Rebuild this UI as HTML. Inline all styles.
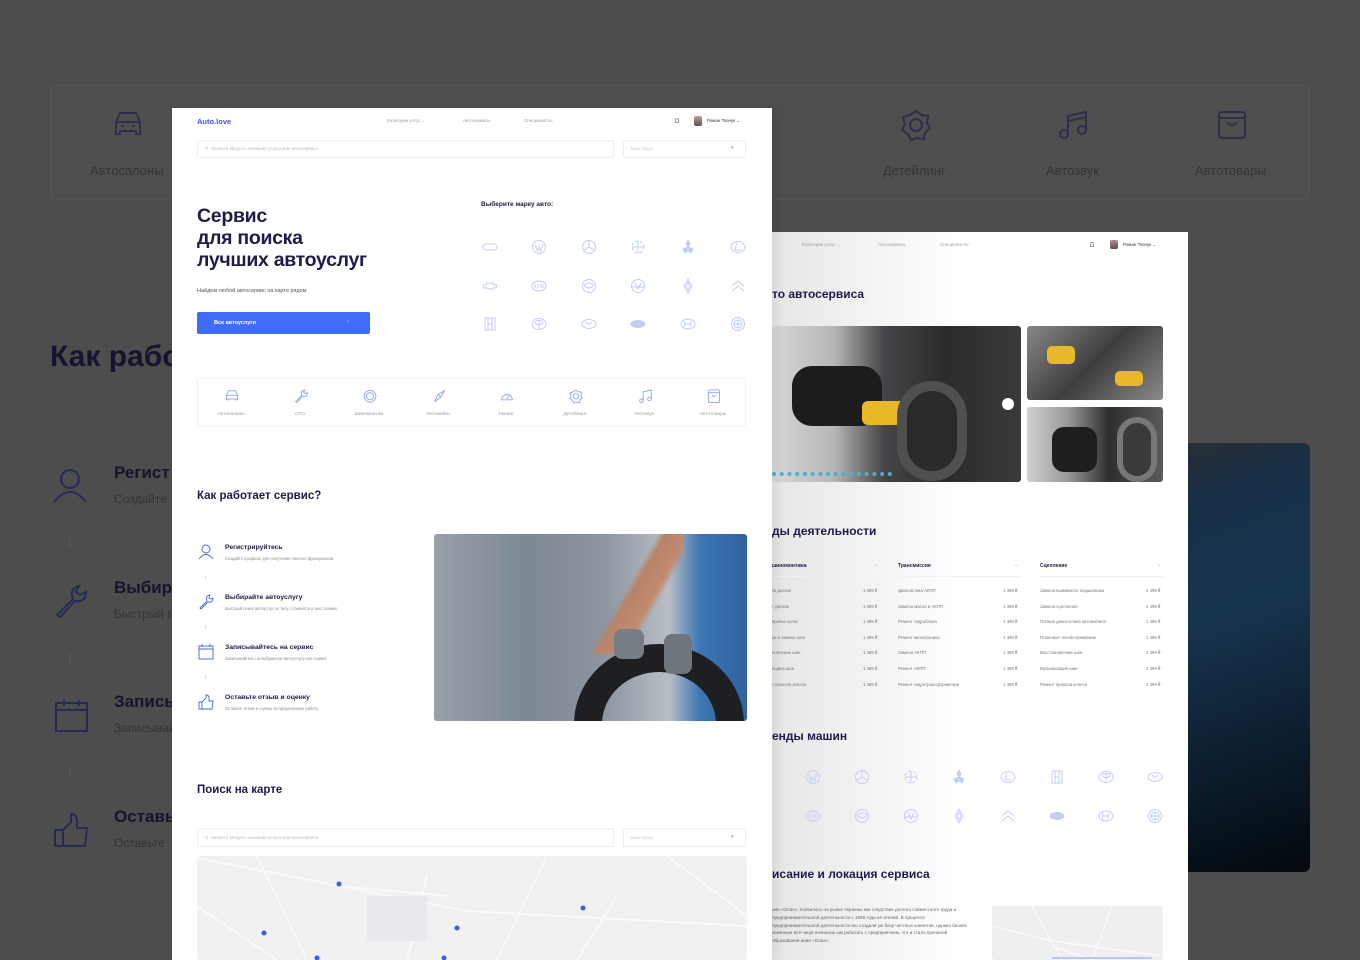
<!DOCTYPE html>
<html><head><meta charset="utf-8">
<style>
*{margin:0;padding:0;box-sizing:border-box}
body{width:1360px;height:960px;overflow:hidden;background:#4d4d4d;font-family:"Liberation Sans","Noto Sans CJK SC",sans-serif;position:relative}
.a{position:absolute;white-space:nowrap}
.dk{color:#1d1c4a;font-weight:bold}
.g{color:#9a9cab}
.bg-t{color:#15142e;font-weight:bold}
.bg-s{color:#333338}
svg{position:absolute;overflow:visible}
</style></head><body>

<!-- BACKGROUND (dimmed page) -->
<div class="a" style="left:50px;top:85px;width:1260px;height:115px;border:1px solid #555;border-radius:6px;background:#4f4f4f"></div>
<svg style="left:112px;top:110px" width="32" height="28" fill="none" stroke="#2c2f45" stroke-width="2"><path d="M4 12 L8 3 H24 L28 12 V24 H24 V21 H8 V24 H4 Z M4 12 H28 M9 16 H12 M20 16 H23"/></svg>
<div class="a bg-s" style="left:90px;top:163px;font-size:13px">Автосалоны</div>
<svg style="left:900px;top:109px" width="32" height="32" fill="none" stroke="#2c2f45" stroke-width="2"><path d="M16 2 L21 6 L28 7 L27 14 L30 19 L25 24 L24 30 L17 29 L11 31 L8 25 L2 21 L5 15 L3 8 L10 6 Z"/><circle cx="16" cy="16" r="6"/></svg>
<div class="a bg-s" style="left:883px;top:163px;font-size:13px">Детейлинг</div>
<svg style="left:1058px;top:110px" width="32" height="30" fill="none" stroke="#2c2f45" stroke-width="2"><circle cx="6" cy="24" r="4"/><circle cx="24" cy="20" r="4"/><path d="M10 24 V6 L28 2 V20 M10 11 L28 7"/></svg>
<div class="a bg-s" style="left:1046px;top:163px;font-size:13px">Автозвук</div>
<svg style="left:1217px;top:110px" width="30" height="30" fill="none" stroke="#2c2f45" stroke-width="2"><rect x="2" y="2" width="26" height="26" rx="3"/><path d="M2 8 H28 M10 12 Q15 18 20 12"/></svg>
<div class="a bg-s" style="left:1195px;top:163px;font-size:13px">Автотовары</div>
<div class="a bg-s" style="left:763px;top:163px;font-size:13px">г</div>

<div class="a bg-t" style="left:50px;top:340px;font-size:30px">Как рабо</div>
<svg style="left:52px;top:468px" width="36" height="36" fill="none" stroke="#252a55" stroke-width="2"><circle cx="18" cy="11" r="9"/><path d="M2 34 Q18 14 34 34"/></svg>
<div class="a bg-t" style="left:114px;top:463px;font-size:17px">Регист</div>
<div class="a bg-s" style="left:114px;top:492px;font-size:12px">Создайте</div>
<div class="a" style="left:69px;top:538px;width:2px;height:10px;background:#555"></div>
<svg style="left:53px;top:583px" width="36" height="36" fill="none" stroke="#252a55" stroke-width="2"><path d="M4 32 L20 16 Q16 6 26 3 L23 9 L27 12 L33 9 Q32 20 22 18 L7 34 Z"/></svg>
<div class="a bg-t" style="left:114px;top:578px;font-size:17px">Выбира</div>
<div class="a bg-s" style="left:114px;top:607px;font-size:12px">Быстрый п</div>
<div class="a" style="left:69px;top:653px;width:2px;height:10px;background:#555"></div>
<svg style="left:55px;top:699px" width="34" height="34" fill="none" stroke="#252a55" stroke-width="2"><rect x="1" y="4" width="31" height="28"/><path d="M1 11 H32 M9 1 V7 M24 1 V7"/></svg>
<div class="a bg-t" style="left:114px;top:692px;font-size:17px">Запись</div>
<div class="a bg-s" style="left:114px;top:721px;font-size:12px">Записывай</div>
<div class="a" style="left:69px;top:768px;width:2px;height:10px;background:#555"></div>
<svg style="left:53px;top:812px" width="36" height="36" fill="none" stroke="#252a55" stroke-width="2"><path d="M2 18 H10 V34 H2 Z M10 18 L18 10 V2 Q24 2 24 10 V16 H34 L32 34 H10"/></svg>
<div class="a bg-t" style="left:114px;top:807px;font-size:17px">Оставь</div>
<div class="a bg-s" style="left:114px;top:836px;font-size:12px">Оставьте</div>

<div class="a" style="left:1170px;top:443px;width:140px;height:429px;border-radius:6px;background:linear-gradient(160deg,#2a2d33 0%,#183048 15%,#17344f 40%,#0e2234 65%,#03080d 100%)"></div>

<!-- RIGHT PAGE -->
<div class="a" style="left:772px;top:232px;width:416px;height:728px;background:linear-gradient(90deg,#e6e6e6 0%,#f4f4f4 25%,#fff 45%)"></div>
<div class="a g" style="left:802px;top:242px;font-size:4.5px">Категории услуг ⌄</div>
<div class="a g" style="left:878px;top:242px;font-size:4.5px">Автосервисы</div>
<div class="a g" style="left:940px;top:242px;font-size:4.5px">Специалисты</div>
<div class="a" style="left:1090px;top:242px;width:4px;height:5px;border:1px solid #999;border-radius:2px 2px 0 0"></div>
<div class="a" style="left:1110px;top:240px;width:8px;height:9px;border-radius:2px;background:linear-gradient(#b88,#555)"></div>
<div class="a" style="left:1123px;top:242px;font-size:4.5px;color:#333">Роман Ткачук ⌄</div>
<div class="a dk" style="left:772px;top:287px;font-size:12px">то автосервиса</div>
<div class="a" style="left:772px;top:326px;width:249px;height:156px;border-radius:3px;overflow:hidden;background:linear-gradient(90deg,#d8d8d8 0%,#b6b6b6 25%,#454548 45%,#2b2b2d 70%,#3a3a3c 100%)">
 <div class="a" style="left:20px;top:40px;width:90px;height:60px;background:#1c1c1e;border-radius:20px"></div>
 <div class="a" style="left:90px;top:75px;width:45px;height:24px;background:#e8b828;border-radius:6px"></div>
 <div class="a" style="left:125px;top:55px;width:70px;height:100px;border-radius:35px;background:#2a2a2a;border:10px solid #505050"></div>
 <div class="a" style="left:0px;top:130px;width:120px;height:20px;border-bottom:4px dotted #4ab0d0"></div>
 <div class="a" style="left:230px;top:72px;width:12px;height:12px;border-radius:50%;background:#fff"></div>
</div>
<div class="a" style="left:1027px;top:326px;width:136px;height:74px;border-radius:3px;background:linear-gradient(135deg,#888 0%,#3d3d3d 50%,#8a8a88 100%)">
 <div class="a" style="left:20px;top:20px;width:28px;height:18px;background:#e8b828;border-radius:5px"></div>
 <div class="a" style="left:88px;top:45px;width:28px;height:15px;background:#e8b828;border-radius:5px"></div>
</div>
<div class="a" style="left:1027px;top:407px;width:136px;height:75px;border-radius:3px;background:linear-gradient(90deg,#d0d0d0 0%,#9a9a9a 30%,#2e2e30 60%,#5a5a5a 100%)">
 <div class="a" style="left:25px;top:20px;width:45px;height:45px;background:#1e1e20;border-radius:12px"></div>
 <div class="a" style="left:90px;top:10px;width:40px;height:65px;border-radius:20px;background:#3a3a3a;border:6px solid #777"></div>
</div>
<div class="a dk" style="left:772px;top:524px;font-size:12px">ды деятельности</div>
<div id="svc"></div>
<div class="a dk" style="left:772px;top:729px;font-size:12px">енды машин</div>
<div class="a dk" style="left:772px;top:867px;font-size:12px">исание и локация сервиса</div>
<div class="a" style="left:772px;top:906px;width:200px;font-size:4.6px;line-height:7.8px;color:#666;white-space:normal">ния «Олан», появилась на рынке Украины как следствие долгого совместного труда и предпринимательской деятельности с 1999 года её ателей. В процессе предпринимательской деятельности мы создали ую базу частных клиентов, однако бизнес компании всё чаще начинали ым работать с предприятием, что и стало причиной образования ании «Олан».</div>
<div class="a" style="left:992px;top:906px;width:171px;height:54px;background:#eeeff1;border-radius:3px"></div>
<svg style="left:992px;top:906px" width="171" height="54" fill="none" stroke="#fafafa" stroke-width="1.5"><path d="M0 20 L60 35 L170 50 M40 0 L70 54 M120 0 L100 54 M60 40 L100 54"/><path d="M60 52 H160" stroke="#aab8f0"/></svg>

<!-- LEFT PAGE -->
<div class="a" style="left:172px;top:108px;width:600px;height:852px;background:#fff;box-shadow:4px 0 10px rgba(0,0,0,.08)"></div>
<div class="a" style="left:197px;top:117px;font-size:7.5px;font-weight:bold;color:#3b55e6">Auto.love</div>
<div class="a g" style="left:387px;top:118px;font-size:4.5px">Категории услуг ⌄</div>
<div class="a g" style="left:463px;top:118px;font-size:4.5px">Автосервисы</div>
<div class="a g" style="left:524px;top:118px;font-size:4.5px">Специалисты</div>
<div class="a" style="left:675px;top:118px;width:4px;height:5px;border:1px solid #999;border-radius:2px 2px 0 0"></div>
<div class="a" style="left:694px;top:116px;width:8px;height:10px;border-radius:2px;background:linear-gradient(#c99,#555)"></div>
<div class="a" style="left:707px;top:118px;font-size:4.5px;color:#333">Роман Ткачук ⌄</div>
<div class="a" style="left:197px;top:140px;width:417px;height:18px;border:1px solid #eceef5;border-radius:2px"></div>
<div class="a g" style="left:205px;top:146px;font-size:4.5px;color:#bbb">⚲ &nbsp;Начните вводить название услуги или автосервиса</div>
<div class="a" style="left:623px;top:140px;width:123px;height:18px;border:1px solid #eceef5;border-radius:2px"></div>
<div class="a" style="left:631px;top:146px;font-size:4.5px;color:#ccc">Ваш город</div>
<div class="a" style="left:731px;top:145px;font-size:5px;color:#999">▾</div>

<div class="a dk" style="left:197px;top:205px;font-size:19.5px;line-height:22px;letter-spacing:-0.3px">Сервис<br>для поиска<br>лучших автоуслуг</div>
<div class="a" style="left:197px;top:288px;font-size:5.5px;color:#555">Найдем любой автосервис на карте рядом</div>
<div class="a" style="left:197px;top:312px;width:173px;height:22px;background:#3f6cf5;border-radius:2px"></div>
<div class="a" style="left:214px;top:320px;font-size:5.5px;color:#fff;font-weight:bold">Все автоуслуги</div>
<div class="a" style="left:347px;top:319px;font-size:6px;color:#cfd9ff">›</div>
<div class="a dk" style="left:481px;top:201px;font-size:6.5px">Выберите марку авто:</div>
<div id="brands"></div>

<div class="a" style="left:197px;top:378px;width:549px;height:49px;border:1px solid #eef0f6;border-radius:3px"></div>
<div id="cats"></div>

<div class="a dk" style="left:197px;top:490px;font-size:11.5px">Как работает сервис?</div>
<div id="steps"></div>
<div class="a" style="left:434px;top:534px;width:313px;height:187px;border-radius:3px;overflow:hidden;background:linear-gradient(90deg,#98a0aa 0%,#7d8792 30%,#8e96a0 55%,#b9bec6 75%,#3d76b2 85%,#2e62a0 100%)">
 <div class="a" style="left:140px;top:110px;width:170px;height:160px;border-radius:50%;border:28px solid #1d1f22"></div>
 <div class="a" style="left:160px;top:0;width:90px;height:120px;background:linear-gradient(120deg,transparent 40%,#b88368 45%,#c08b70 60%,transparent 65%)"></div>
 <div class="a" style="left:180px;top:95px;width:30px;height:30px;background:#777d85;border-radius:8px"></div>
 <div class="a" style="left:230px;top:100px;width:28px;height:40px;background:#6f757d;border-radius:8px"></div>
</div>

<div class="a dk" style="left:197px;top:784px;font-size:11.5px">Поиск на карте</div>
<div class="a" style="left:197px;top:828px;width:417px;height:19px;border:1px solid #eceef5;border-radius:2px"></div>
<div class="a" style="left:205px;top:835px;font-size:4.5px;color:#bbb">⚲ &nbsp;Начните вводить название услуги или автосервиса</div>
<div class="a" style="left:623px;top:828px;width:123px;height:19px;border:1px solid #eceef5;border-radius:2px"></div>
<div class="a" style="left:631px;top:835px;font-size:4.5px;color:#ccc">Ваш город</div>
<div class="a" style="left:731px;top:834px;font-size:5px;color:#999">▾</div>
<div class="a" style="left:197px;top:856px;width:550px;height:104px;background:#f0f1f3;border-radius:3px"></div>
<svg style="left:197px;top:856px" width="550" height="104" fill="none" stroke="#fafafa" stroke-width="2"><path d="M0 2 L270 55 L550 70 M60 0 L110 104 M230 20 L210 104 M350 0 L300 104 M420 40 L380 104 M470 0 L550 60 M0 50 L80 104 M140 30 L250 40"/><rect x="170" y="40" width="60" height="45" fill="#e8e9ec" stroke="none"/></svg>
<svg style="left:197px;top:856px" width="550" height="104" fill="#3f5be8"><circle cx="142" cy="28" r="2.5"/><circle cx="247" cy="102" r="2.5"/><circle cx="386" cy="52" r="2.5"/><circle cx="67" cy="77" r="2.5"/><circle cx="120" cy="102" r="2.5"/><circle cx="260" cy="72" r="2.5"/></svg>

<script>
function ico(kind,c,sw){
 const P={
 car:'<path d="M2 7 L4 2 H12 L14 7 V12 H12 V11 H4 V12 H2 Z M2 7 H14"/>',
 wrench:'<path d="M2 14 L9 7 Q7 2 12 1 L11 4 L13 5 L15 4 Q15 9 10 8 L3 15 Z"/>',
 tire:'<circle cx="8" cy="8" r="6.5"/><circle cx="8" cy="8" r="4"/>',
 vac:'<path d="M3 14 L7 6 L14 2 L10 9 Z M7 6 L10 9"/>',
 speed:'<path d="M2 12 A6 6 0 1 1 14 12 Z M8 11 L11 6"/>',
 gear:'<path d="M8 1 L10.5 3 L14 3.5 L13.5 7 L15 10 L12.5 12 L12 15 L8.5 14.5 L5.5 15.5 L4 12.5 L1 10.5 L2.5 7.5 L1.5 4 L5 3 Z"/><circle cx="8" cy="8" r="3"/>',
 music:'<circle cx="4" cy="13" r="2"/><circle cx="13" cy="11" r="2"/><path d="M6 13 V3 L15 1 V11"/>',
 bag:'<rect x="2" y="1" width="12" height="14" rx="1.5"/><path d="M2 4 H14 M6 7 Q8 10 10 7"/>',
 user:'<circle cx="8" cy="5" r="4"/><path d="M1 15 Q8 6 15 15"/>',
 cal:'<rect x="1" y="2" width="14" height="13"/><path d="M1 5 H15 M4 0 V3 M12 0 V3"/>',
 like:'<path d="M1 8 H4 V15 H1 Z M4 8 L8 4 V1 Q11 1 11 4 V7 H15 L14 15 H4"/>'};
 return `<svg width="16" height="16" viewBox="0 0 16 16" fill="none" stroke="${c}" stroke-width="${sw}" style="position:static">${P[kind]}</svg>`;
}
function brand(i,c){
 const s=[
 '<rect x="1" y="5" width="14" height="6" rx="3"/>',
 '<circle cx="8" cy="8" r="6.5"/><path d="M4 5 L6.5 12 L8 8 L9.5 12 L12 5"/>',
 '<circle cx="8" cy="8" r="6.5"/><path d="M8 2 V8 L3 11 M8 8 L13 11"/>',
 '<circle cx="8" cy="8" r="6" stroke-dasharray="3 2"/><path d="M8 2 V14 M2 8 H14"/>',
 '<path d="M8 1 L10 5 L8 8 L6 5 Z M8 8 L13 10 L11 14 L7 11 Z M8 8 L3 10 L5 14 L9 11 Z" fill="'+c+'"/>',
 '<ellipse cx="8" cy="8" rx="7" ry="5.5"/><path d="M7 4 L5 11 H11"/>',
 '<path d="M1 7 H4 L5 5 H11 L12 7 H15 L14 10 H11 L10 11 H6 L5 10 H2 Z"/>',
 '<ellipse cx="8" cy="8" rx="7" ry="5"/><path d="M4 6 V10 M7 6 V10 M10 6 V10 M12 6 V10"/>',
 '<circle cx="8" cy="8" r="6.5"/><path d="M3 7 Q8 13 13 7 Q8 3 3 7"/>',
 '<circle cx="8" cy="8" r="6.5"/><path d="M1 9 H15 M5 5 L8 11 L11 5"/>',
 '<path d="M8 1 L12 8 L8 15 L4 8 Z M8 4 L10 8 L8 12 L6 8 Z"/>',
 '<path d="M2 8 L8 3 L14 8 M2 13 L8 8 L14 13"/>',
 '<path d="M3 2 H13 V14 H3 Z M6 2 V14 M10 2 V14 M6 8 H10"/>',
 '<ellipse cx="8" cy="8" rx="7" ry="5.5"/><ellipse cx="8" cy="6.5" rx="4" ry="2"/><path d="M8 4.5 V13.5"/>',
 '<ellipse cx="8" cy="8" rx="7" ry="4.5"/><path d="M5 6 Q8 10 11 6"/>',
 '<ellipse cx="8" cy="8" rx="7" ry="3.5" fill="'+c+'"/>',
 '<ellipse cx="8" cy="8" rx="7" ry="5"/><path d="M5 5 L4 11 M11 5 L10 11 M5 8 H10"/>',
 '<circle cx="8" cy="8" r="6.5"/><circle cx="8" cy="8" r="4"/><path d="M4 8 H12 M8 4 V12"/>'];
 return `<svg width="16" height="16" viewBox="0 0 16 16" fill="none" stroke="${c}" stroke-width="1" style="position:static">${s[i%18]}</svg>`;
}
let h='';
const bc=[490,539,589,638,688,738],br=[247,286,324];
let k=0;for(const y of br)for(const x of bc){h+=`<div class="a" style="left:${x-8}px;top:${y-8}px">${brand(k++,'#c3ccf4')}</div>`}
document.getElementById('brands').outerHTML=h;
h='';const cx=[231,300,369,438,506,575,644,713],cn=['car','wrench','tire','vac','speed','gear','music','bag'],cl=['Автосалоны','СТО','Шиномонтаж','Автомойки','Тюнинг','Детейлинг','Автозвук','Автотовары'];
cx.forEach((x,i)=>{h+=`<div class="a" style="left:${x-7}px;top:388px;transform:scale(.9)">${ico(cn[i],'#8ea2f0',1)}</div><div class="a" style="left:${x-40}px;width:80px;text-align:center;top:412px;font-size:4.8px;color:#9a9aa8">${cl[i]}</div>`});
document.getElementById('cats').outerHTML=h;
h='';const st=[['user','Регистрируйтесь','Создайте профиль для получения полного функционала'],['wrench','Выбирайте автоуслугу','Быстрый поиск автоуслуг по типу, стоимости и расстоянию'],['cal','Записывайтесь на сервис','Записывайтесь на выбранную автоуслугу или сервис'],['like','Оставьте отзыв и оценку','Оставьте отзыв и оценку за проделанную работу']];
st.forEach((s,i)=>{const y=544+i*50;h+=`<div class="a" style="left:198px;top:${y}px">${ico(s[0],'#4a63e0',0.9)}</div><div class="a dk" style="left:225px;top:${y}px;font-size:6.8px">${s[1]}</div><div class="a" style="left:225px;top:${y+12}px;font-size:4.1px;color:#8a8a95">${s[2]}</div>`;if(i<3)h+=`<div class="a" style="left:205px;top:${y+31}px;width:1px;height:4px;background:#ddd"></div>`});
document.getElementById('steps').outerHTML=h;
h='';const cols=[[772,880,'шиномонтажа',['ка дисков','т дисков','ировка колес','ка и замена шин','новление шин','нщика шин','т прокола колеса']],[898,1020,'Трансмиссия',['Диагностика АКПП','Замена масла в АКПП','Ремонт гидроблока','Ремонт мехатроника','Замена АКПП','Ремонт АКПП','Ремонт гидротрансформатора']],[1040,1163,'Сцепление',['Замена выжимного подшипника','Замена сцепления','Полная диагностика автомобиля','Плановое техобслуживание','Восстановление шин','Вулканизация шин','Ремонт прокола колеса']]];
cols.forEach(c=>{h+=`<div class="a dk" style="left:${c[0]}px;top:563px;font-size:5px">${c[2]}</div><div class="a" style="left:${c[1]-6}px;top:562px;font-size:5px;color:#aaa">⌄</div><div class="a" style="left:${c[0]}px;top:576px;width:${c[1]-c[0]}px;height:1px;background:#eef0f5"></div>`;c[3].forEach((t,j)=>{const y=588+j*15.6;h+=`<div class="a" style="left:${c[0]}px;top:${y}px;font-size:4.3px;color:#777">${t}</div><div class="a" style="left:${c[1]-17}px;top:${y}px;font-size:4.3px;color:#777">1 499 ₴</div>`})});
const rx=[812,861,910,958,1007,1056,1105,1154];const o1=[1,2,3,4,5,12,13,14],o2=[7,8,9,10,11,15,16,17];
rx.forEach((x,i)=>{h+=`<div class="a" style="left:${x-7}px;top:769px">${brand(o1[i],'#c6cdf3')}</div><div class="a" style="left:${x-7}px;top:808px">${brand(o2[i],'#c6cdf3')}</div>`});
document.getElementById('svc').outerHTML=h;
</script>
</body></html>
